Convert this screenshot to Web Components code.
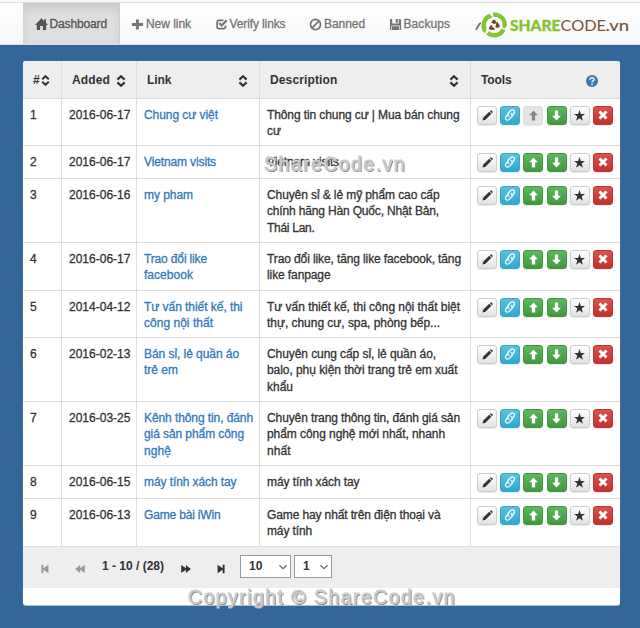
<!DOCTYPE html>
<html lang="vi"><head><meta charset="utf-8"><title>Dashboard</title>
<style>
html,body{margin:0;height:100%}
body{background:#336699;font:12px/16.4px "Liberation Sans",Arial,sans-serif;color:#333;overflow:hidden}
</style></head><body>
<link-app></link-app>
<script>
const ICONS={
home:'<path d="M7 .4 10 3.4V1.4h1.8v3.8L14 7.6h-2V13H8.5V8.5h-3V13H2V7.6H0z"/>',
plus:'<path d="M5.3 1.5h3.2v4H13v3H8.500v4H5.300v-4H1v-3h4.300z"/>',
check:'<path d="M9 2.500H4.300Q2.300 2.500 2.300 4.500v5q0 2 2 2h5q2 0 2-2V8" fill="none" stroke="currentColor" stroke-width="1.900"/><path d="M4.500 5.300 7.200 8 12.600 2.400" fill="none" stroke="currentColor" stroke-width="2.400"/>',
ban:'<circle cx="7" cy="7" r="5.400" fill="none" stroke="currentColor" stroke-width="1.900"/><path d="M3.300 10.700 10.700 3.300" stroke="currentColor" stroke-width="1.900"/>',
save:'<path d="M1 1h2.500v5h7V1H12l1 1v11h-1.500V8.200h-9V13H1zM7.200 1h2.300v4H7.200zM3.200 9h7.600v4H3.200z" fill-rule="evenodd"/>',
pencil:'<path d="M.6 13.400 1.700 9.600 9.200 2.100 11.900 4.800 4.400 12.300zM10 1.400l.9-.9q.6-.4 1.100.1l1.400 1.400q.5.500.1 1.100l-.9.9z"/>',
link:'<g fill="none" stroke="currentColor" stroke-width="1.600" stroke-linecap="round"><path d="M5.600 8.800C3.900 7.700 3.900 6 5 4.700L8 1.700C9.300.5 11.500.8 12.100 2.300c.5 1.300.1 2.200-.7 3.200L9.300 7.600"/><path d="M8.400 5.200C10.100 6.300 10.100 8 9 9.300L6 12.300C4.700 13.500 2.500 13.200 1.900 11.700c-.5-1.300-.1-2.200.7-3.200L4.700 6.400"/></g>',
up:'<path d="M7 .5 12.500 6.800H9.100v6.600H4.900V6.800H1.500z"/>',
down:'<path d="M7 13.500 12.500 7.200H9.100V.6H4.900v6.600H1.500z"/>',
star:'<path d="M7 0 8.700 5.100 14 5.200 9.800 8.400 11.300 13.600 7 10.500 2.700 13.600 4.200 8.400 0 5.200 5.300 5.100z"/>',
x:'<path d="M3.500.7 7 4.200 10.500.7 13.300 3.500 9.800 7 13.300 10.500 10.500 13.300 7 9.800 3.500 13.300.7 10.500 4.200 7 .7 3.500z"/>',
sort:'<path d="M2.800 5.400 7 1.500l4.200 3.900M2.800 8.600 7 12.500l4.200-3.900" fill="none" stroke="currentColor" stroke-width="2.500"/>',
help:'<circle cx="7" cy="7" r="7"/><path d="M4.700 5.500Q4.700 3.200 7.100 3.200 9.400 3.200 9.400 5.200 9.400 6.200 8.300 6.800 7.100 7.400 7.100 8.600" fill="none" stroke="#eee" stroke-width="1.900"/><path d="M6.100 9.600h2v1.900H6.100z" fill="#eee"/>',
first:'<path d="M2 1h2.700v5L11.800 1v12L4.700 8v5H2z"/>',
prev:'<path d="M7.200 1.300V6L13.700 1.300v11.400L7.200 8v4.700L.2 7z"/>',
next:'<path d="M6.800 1.300V6L.3 1.300v11.400L6.800 8v4.700L13.800 7z"/>',
last:'<path d="M12 1H9.300v5L2.200 1v12L9.300 8v5H12z"/>',
wrench:'<path d="M0 12.500 4 5.500 6.500 3.500 7 5 2.500 12.500z"/>',
chev:'<path d="M2 4.500 7 9.300l5-4.800" fill="none" stroke="currentColor" stroke-width="1.600"/>'
};
const def=(n,css,html,after)=>customElements.define(n,class extends HTMLElement{
 connectedCallback(){ if(this.shadowRoot)return;
  this.attachShadow({mode:'open'}).innerHTML='<style>'+css+'</style>'+(typeof html==='function'?html(this):html);
  if(after)after(this);}
});
/* Glyph icon on a 14-unit grid; `s` is its size in px. */
def('g-icon',':host{display:inline-block;flex:none;line-height:0}svg{display:block;fill:currentColor}',
 e=>{const s=e.getAttribute('s')||12;return `<svg width="${s}" height="${s}" viewBox="0 0 14 14">${ICONS[e.getAttribute('n')]}</svg>`});
/* One line of text, tracked to the advance width `w`. */
def('t-line',':host{display:block;white-space:nowrap;-webkit-text-stroke:var(--ink,.3px)}span{display:inline-block}',
 e=>`<span>${e.getAttribute('t').replace(/&/g,'&amp;')}</span>`,
 e=>{const w=+e.getAttribute('w'),s=e.shadowRoot.querySelector('span');
  if(w)s.style.letterSpacing=((w-s.getBoundingClientRect().width)/e.getAttribute('t').length)+'px';});
def('nav-item',`:host{display:flex;align-items:center;box-sizing:border-box;height:100%;color:#757575;gap:2px;padding-top:2px}
 :host([on]){background:linear-gradient(#d5d5d5,#dedede 30%,#dfdfdf);color:#555;box-shadow:inset 0 3px 9px rgba(0,0,0,.075)}`,
 e=>`<g-icon n="${e.getAttribute('i')}" s="${e.getAttribute('s')||12}"></g-icon><t-line t="${e.getAttribute('t')}" w="${e.getAttribute('w')}"></t-line>`);
def('share-logo',':host{display:block}svg{display:block;overflow:visible}',
`<svg width="152" height="30" viewBox="0 0 152 30">
<g fill="none" stroke="#85c430" stroke-width="4.300"><path d="M5.500 20.500A10.300 10.300 0 0 1 11 6.700"/><path d="M14.200 5.700A10.300 10.300 0 0 1 25.700 17"/><path d="M24.500 20.500A10.300 10.300 0 0 1 8.600 23.800"/></g>
<path d="M10 4.800 13.800 8.200 9.300 9.800zM28 16.500 25.200 20 22.800 16.500zM2.800 21.500 7.500 19.300 6.500 24.300z" fill="#85c430"/>
<g fill="#6b452b"><path d="M12.300 13.800Q12.800 11.200 15.800 10.600L17.800 14 15.300 15z"/><path d="M18 12.500Q21 15.500 20.500 18.500L16.500 18.800 16.800 16z"/><path d="M16.500 20.300Q11.500 22 9.500 19.500L12.200 15.800 13.800 18.300z"/></g>
<g font-family="Lato,sans-serif" font-size="15.500"><text x="31" y="22" font-weight="900" fill="#85c430" stroke="#85c430" stroke-width=".3" textLength="50.500" lengthAdjust="spacingAndGlyphs">SHARE</text>
<text x="81.500" y="22" fill="#75553e" textLength="45.500" lengthAdjust="spacingAndGlyphs">CODE</text>
<text x="126.500" y="22" fill="#75553e" stroke="#75553e" stroke-width=".2" textLength="23.500" lengthAdjust="spacingAndGlyphs">.vn</text></g></svg>`);
def('top-nav',`:host{display:block;height:45px;box-sizing:border-box;background:linear-gradient(#fff,#f7f7f7);border-top:2px solid #f6f6f6;border-bottom:1px solid #d9dde2;position:relative}
 nav{display:flex;height:100%;box-sizing:border-box;border-top:1px solid #ddd;padding-left:23px}
 nav-item:nth-child(1){padding-left:11.500px;border-right:1px solid #ccc;box-sizing:border-box;width:97px}
 nav-item:nth-child(2){margin-left:11px;width:71px}nav-item:nth-child(3){margin-left:12.500px;width:82px}
 nav-item:nth-child(4){margin-left:12.500px;width:68px}nav-item:nth-child(5){margin-left:11.500px;width:72px}
 nav-item:nth-child(6){margin-left:14px}
 share-logo{position:absolute;left:479px;top:7px}`,
`<nav><nav-item on i="home" t="Dashboard" w="57.500" s="13"></nav-item><nav-item i="plus" t="New link" w="45" s="13"></nav-item>
<nav-item i="check" t="Verify links" w="56" s="13"></nav-item><nav-item i="ban" t="Banned" w="41" s="13"></nav-item>
<nav-item i="save" t="Backups" w="46.500" s="13"></nav-item><nav-item i="wrench" t="" w="0"></nav-item></nav><share-logo></share-logo>`);
def('tool-button',`:host{display:flex;box-sizing:border-box;width:20px;height:19px;align-items:center;justify-content:center;border-radius:3px;border:1px solid #ccc;background:linear-gradient(#fff,#e3e3e3);color:#333;padding-bottom:1px;box-shadow:0 1px 1px rgba(0,0,0,.08)}
 :host([k=info]){background:linear-gradient(#5bc0de,#2fa8cd);border-color:#32aacb;color:#e9faff}
 :host([k=ok]){background:linear-gradient(#5cb85c,#439943);border-color:#429642;color:#fff}
 :host([k=bad]){background:linear-gradient(#d9534f,#c3302c);border-color:#bd3632;color:#fff}
 :host([k=off]){background:#e5e5e5;border-color:#ddd;color:#888}`,
 e=>`<g-icon n="${e.getAttribute('i')}" s="${e.getAttribute('s')||11}"></g-icon>`);
const COLS='display:grid;grid-template-columns:39px 75px 123px 211px 1fr;';
def('head-row',`:host{${COLS}height:37px;background:#eee;font-weight:bold;--ink:0;border-radius:3px 3px 0 0}
 div{display:flex;align-items:center;justify-content:space-between;padding:2px 10px 0;border-right:1px solid #ddd}
 div:first-child{padding:2px 10px 0 10px}div:nth-child(3){padding-right:9px}div:last-child{border:0;padding-right:22px}g-icon[n=help]{color:#337ab7}`,
`<div><t-line t="#" w="7"></t-line><g-icon n="sort" s="11"></g-icon></div><div><t-line t="Added" w="38"></t-line><g-icon n="sort"></g-icon></div>
<div><t-line t="Link" w="24.500"></t-line><g-icon n="sort"></g-icon></div><div><t-line t="Description" w="67.500"></t-line><g-icon n="sort"></g-icon></div>
<div><t-line t="Tools" w="30.500"></t-line><g-icon n="help" s="12"></g-icon></div>`);
const ROWS=[
[47,'2016-06-17',[['Chung cư việt',74]],[['Thông tin chung cư | Mua bán chung',192.5],['cư',14]]],
[33,'2016-06-17',[['Vietnam visits',72]],[['Vietnam visits',72]]],
[64,'2016-06-16',[['my pham',49]],[['Chuyên sỉ & lẻ mỹ phẩm cao cấp',172.5],['chính hãng Hàn Quốc, Nhật Bản,',172],['Thái Lan.',47.5]]],
[48,'2016-06-17',[['Trao đổi like',63],['facebook',49]],[['Trao đổi like, tăng like facebook, tăng',194],['like fanpage',63.5]]],
[47,'2014-04-12',[['Tư vấn thiết kế, thi',98.5],['công nội thất',69]],[['Tư vấn thiết kế, thi công nội thất biệt',193],['thự, chung cư, spa, phòng bếp...',173]]],
[64,'2016-02-13',[['Bán sỉ, lẻ quần áo',95],['trẻ em',34]],[['Chuyên cung cấp sỉ, lẻ quần áo,',169],['balo, phụ kiện thời trang trẻ em xuất',190.5],['khẩu',26]]],
[64,'2016-03-25',[['Kênh thông tin, đánh',109],['giá sản phẩm công',100],['nghệ',27]],[['Chuyên trang thông tin, đánh giá sản',193],['phẩm công nghệ mới nhất, nhanh',178],['nhất',23.5]]],
[33,'2016-06-15',[['máy tính xách tay',92.5]],[['máy tính xách tay',92.5]]],
[48,'2016-06-13',[['Game bài iWin',76.5]],[['Game hay nhất trên điện thoại và',173.5],['máy tính',45]]]];
const lines=a=>a.map(([t,w])=>`<t-line t="${t.replace(/&/g,'&amp;')}" w="${w}"></t-line>`).join('');
def('link-row',`:host{${COLS}height:var(--h);background:#fff}
 div{border-top:1px solid #ddd;border-right:1px solid #ddd;padding:8px 0 0 7px;box-sizing:border-box;height:var(--h);overflow:hidden}
 .a{color:#337ab7}div:last-child{border-right:0;display:flex;gap:3.200px;padding-top:7px;padding-left:6px}`,
 e=>{const i=+e.getAttribute('r'),[h,d,l,x]=ROWS[i];e.style.setProperty('--h',h+'px');
 return `<div>${lines([[''+(i+1),6.7]])}</div><div>${lines([[d,61.5]])}</div><div class="a">${lines(l)}</div><div>${lines(x)}</div>
 <div><tool-button i="pencil"></tool-button><tool-button k="info" i="link" s="12"></tool-button><tool-button k="${i?'ok':'off'}" i="up" s="11"></tool-button><tool-button k="ok" i="down" s="11"></tool-button><tool-button i="star"></tool-button><tool-button k="bad" i="x" s="10"></tool-button></div>`});
def('pick-box',':host{display:flex;box-sizing:border-box;height:23px;border:1px solid #999;background:#fff;align-items:center;justify-content:space-between;padding:0 2px 0 8px;font-weight:bold;--ink:0}g-icon{color:#666}',
 e=>`<t-line t="${e.getAttribute('v')}" w="${e.getAttribute('w')}"></t-line><g-icon n="chev" s="10"></g-icon>`);
def('pager-bar',`:host{display:flex;height:42px;box-sizing:border-box;background:#eee;border-top:1px solid #ddd;padding:8px 0 0 17px}
 g-icon{margin-top:9px}.off{color:#999}t-line{font-weight:bold;--ink:0;margin:3px 0 0 17px;width:62px}`,
`<g-icon class="off" n="first" s="10"></g-icon><g-icon class="off" n="prev" s="10" style="margin-left:25px"></g-icon>
<t-line t="1 - 10 / (28)" w="62"></t-line><g-icon n="next" s="10" style="margin-left:17px"></g-icon><g-icon n="last" s="10" style="margin-left:25px"></g-icon>
<pick-box v="10" w="13.300" style="width:51px;margin-left:14px"></pick-box><pick-box v="1" w="6.700" style="width:38px;margin-left:3px"></pick-box>`);
def('water-mark',':host{position:absolute;white-space:nowrap;font-size:19.500px;line-height:24px;color:#c9c9c9;text-shadow:1px 1px 0 #777;--ink:.8px #c9c9c9}',
 e=>`<t-line t="${e.getAttribute('t')}" w="${e.getAttribute('w')}"></t-line>`);
def('link-app',`:host{display:block;position:relative;height:628px}
 main{margin:16px 20px 0 23px;height:544px;background:#fff;border-radius:3px;box-shadow:0 1px 0 #a9bfd4,0 0 1px #8fb0cf}`,
`<top-nav></top-nav><main><head-row></head-row>${ROWS.map((_,i)=>`<link-row r="${i}"></link-row>`).join('')}<pager-bar></pager-bar></main>
<water-mark t="ShareCode.vn" w="142" style="left:264px;top:152px"></water-mark>
<water-mark t="Copyright © ShareCode.vn" w="268" style="left:188px;top:585px"></water-mark>`);
</script></body></html>
